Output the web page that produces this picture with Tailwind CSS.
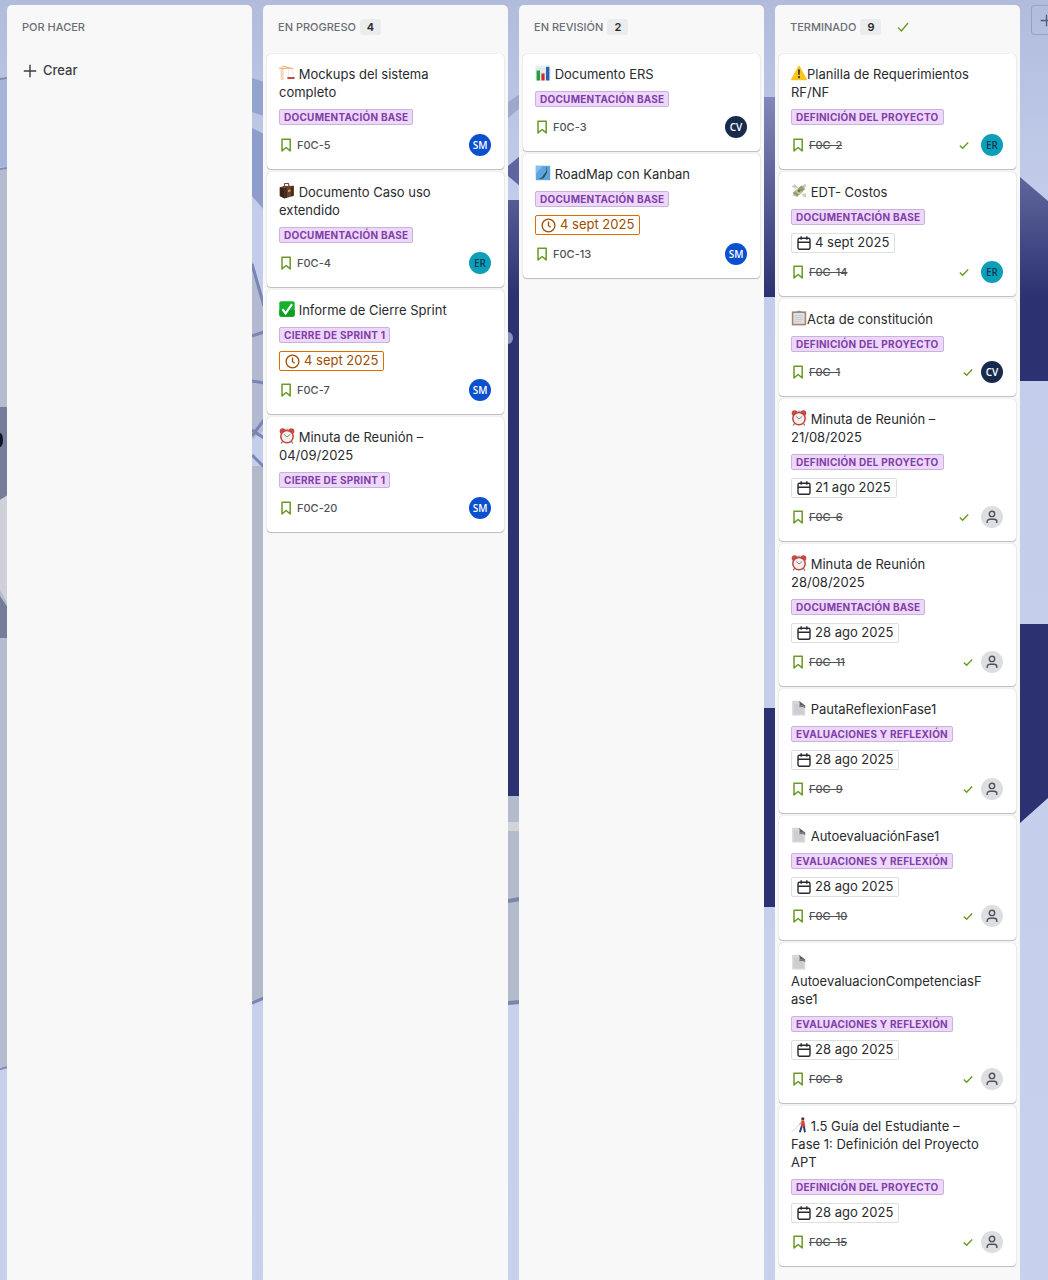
<!DOCTYPE html>
<html lang="es">
<head>
<meta charset="utf-8">
<meta name="viewport" content="width=device-width, initial-scale=1">
<title>Tablero</title>
<script src="https://cdn.jsdelivr.net/npm/@tailwindcss/browser@4"></script>
</head>
<body class="overflow-x-hidden bg-[#c7d0ec] font-['Inter',sans-serif] text-[#292a2e]">

<!-- Icon sprite -->
<svg class="hidden" aria-hidden="true">
  <symbol id="bookmark" viewBox="0 0 14 14"><path d="M3 1.3h8.2v11.6L7.1 9.5 3 12.9z" fill="none" stroke="#6a9a23" stroke-width="1.5" stroke-linejoin="round"/></symbol>
  <symbol id="check" viewBox="0 0 12 12"><path d="M1 6.6 4.4 10 11 2" fill="none" stroke="#6a9a23" stroke-width="1.4"/></symbol>
  <symbol id="check-small" viewBox="0 0 10 10"><path d="M.8 5.6 3.6 8.2 9.2 2.6" fill="none" stroke="#6a9a23" stroke-width="1.4"/></symbol>
  <symbol id="plus" viewBox="0 0 14 14"><path d="M7 .8v12.4M.8 7h12.4" fill="none" stroke="currentColor" stroke-width="1.4"/></symbol>
  <symbol id="calendar" viewBox="0 0 14 14"><rect x="1" y="2.2" width="12" height="11" rx="1.5" fill="none" stroke="currentColor" stroke-width="1.4"/><path d="M1 6.2h12M4.2 .2v3.6M9.8 .2v3.6" stroke="currentColor" stroke-width="1.4"/></symbol>
  <symbol id="clock" viewBox="0 0 16 16"><circle cx="8" cy="8" r="6.8" fill="none" stroke="currentColor" stroke-width="1.4"/><path d="M8 3.8v4.4l2.3 1.6" fill="none" stroke="currentColor" stroke-width="1.4"/></symbol>
  <symbol id="person" viewBox="0 0 14 14"><circle cx="7" cy="3.9" r="2.7" fill="none" stroke="#505258" stroke-width="1.4"/><path d="M2.2 13v-1.2a2.6 2.6 0 0 1 2.6-2.6h4.4a2.6 2.6 0 0 1 2.6 2.6V13" fill="none" stroke="#505258" stroke-width="1.4"/></symbol>

  <symbol id="crane" viewBox="0 0 16 16"><path d="M2.2 1v14M4 1v14M2.2 3l2 2-2 2 2 2-2 2 2 2-2 2" stroke="#f3c99a" stroke-width=".9" fill="none"/><path d="M0 3.4h14.5M4 1l9 2.4" stroke="#f0b98a" stroke-width="1.2" fill="none"/><path d="M10 3.4 9 12M12.5 3.4 15 12" stroke="#e6d8d2" stroke-width=".7"/><path d="M8.4 12h7.2v2H8.4z" fill="#c9493d"/></symbol>
  <symbol id="luggage" viewBox="0 0 16 16"><path d="M5.5 4V1.2Q5.5.5 6.2.5H9q.7 0 .7.7V4" fill="none" stroke="#6b4a35" stroke-width="1.1"/><path d="M.8 4.2 5 3l10-.2v10L5.5 15.5.8 13z" fill="#6a4230"/><path d="M.8 4.2 5.5 5.4v10.1L.8 13z" fill="#3b231b"/><path d="M7 4.9v10M13 3.6v9.6" stroke="#2e1b15" stroke-width="1.2"/><path d="M9 7l2.6-.4v2L9 9z" fill="#c49a5d"/></symbol>
  <symbol id="done" viewBox="0 0 16 16"><rect x=".3" y=".3" width="15.4" height="15.4" rx="2" fill="#17b22b"/><path d="M.3 9h15.4v4.7a2 2 0 0 1-2 2H2.3a2 2 0 0 1-2-2z" fill="#0da01f"/><path d="m3.4 8.3 3.2 4L13 3.2" fill="none" stroke="#fff" stroke-width="2.2"/></symbol>
  <symbol id="alarm" viewBox="0 0 16 16"><path d="m3.5 13.5-1.3 2M12.5 13.5l1.3 2" stroke="#777" stroke-width="1.3"/><circle cx="3.7" cy="3.3" r="3" fill="#c94a43"/><circle cx="12.3" cy="3.3" r="3" fill="#c94a43"/><path d="M6.5 1.2h3" stroke="#999"/><circle cx="8" cy="8.6" r="6.2" fill="#f4efeb" stroke="#c1453f" stroke-width="1.5"/><path d="m5 6.4 3 2.6 3.2-2.6" fill="none" stroke="#777" stroke-width=".9"/></symbol>
  <symbol id="chart" viewBox="0 0 16 16"><path d="M.5.5h15v15H.5z" fill="#e6eef1"/><path d="M.5 4h15M.5 8h15M.5 12h15" stroke="#cddbe1" stroke-width=".6"/><path d="M1.6 5.5h3.4v10H1.6z" fill="#22a03c"/><path d="M6.4 8.5h3.2v7H6.4z" fill="#cc2b2b"/><path d="M11 1.8h3.4v13.7H11z" fill="#2a63b5"/></symbol>
  <symbol id="map" viewBox="0 0 16 16"><path d="M.8.8h14.4v14.4H.8z" fill="#5ea5e0"/><path d="M.8.8h7L.8 9z" fill="#86bdea"/><path d="M12 1.4c-1.8 1.8.4 3.3-1 5.6-1.2 2-2 1.4-3 4-.8 1.6-2.6 2-4.4 2.4 2.6.9 5 .4 6-1.4 1-2.2 1.6-2.6 2.4-4.4.8-2-.6-3.6 0-6.2z" fill="#2d5442"/></symbol>
  <symbol id="warning" viewBox="0 0 16 16"><path d="M8 1.3 15.3 14.6H.7z" fill="#fbc520" stroke="#fbc520" stroke-width="1.4" stroke-linejoin="round"/><path d="M7 4.5h2l-.4 5.6H7.4z" fill="#3b3420"/><circle cx="8" cy="12.2" r="1.1" fill="#3b3420"/></symbol>
  <symbol id="money" viewBox="0 0 16 16"><path d="M.5 3.4 4 1l3.2 3.4-2.4 1.4zM9.5 3.8l4.6-3 1.4 2.8-4 2.4zM1.4 12l3-3 2 1.6-2.8 2.8zM11 11l3.6-.6 1 4-3.4-1z" fill="#c9cbc6"/><path d="m1.6 10 8.8-7.4 3.8 3.4L6 14z" fill="#93a077"/><path d="m4 8 3-2.6 4.6 4L8.4 12z" fill="#d9c08e"/><circle cx="8" cy="7.7" r="1.5" fill="#6d7b54"/></symbol>
  <symbol id="clipboard" viewBox="0 0 16 16"><path d="M.8 1.4h14.4v14H.8z" fill="#a38672"/><path d="M2.4 3h11.2v10.8H2.4z" fill="#dfe0e4"/><path d="M4 5.6h8M4 7.6h8M4 9.6h8M4 11.6h6" stroke="#bfc1c7" stroke-width=".7"/><path d="M5.2 2.6V1.2h1.6Q8-.4 9.2 1.2h1.6v1.4z" fill="#8e9095"/></symbol>
  <symbol id="page" viewBox="0 0 16 16"><path d="M1.2.8h6.6l6.4 5v9.8h-13z" fill="#d6d6d9"/><path d="M3 5h4M3 7h8M3 9h9M3 11h9M3 13h9" stroke="#bebec3" stroke-width=".6"/><path d="M7.8.8c1.2 1.5 1 3.2.6 5 2-.6 4-.6 5.8.8V5.4z" fill="#5e5e63"/><path d="M8.6 5.6c1.8-.6 3.8-.4 5.6 1v1.6C12.4 7 10.4 6.8 8.4 7.6z" fill="#77777c"/></symbol>
  <symbol id="walker" viewBox="0 0 16 16"><path d="M9 7 .6 15" stroke="#ccc" stroke-width=".8"/><circle cx="11.8" cy="1.8" r="1.6" fill="#5b3526"/><path d="M10.2 3.4h3l1.2 6H9.8z" fill="#d4483d"/><path d="m10.6 5-2.2 2.6" stroke="#e3a37c" stroke-width="1.2"/><path d="m10.8 9.2-2 6M12.8 9.2l1.2 6" stroke="#2b3a67" stroke-width="1.9"/></symbol>
</svg>

<div class="relative min-h-screen overflow-hidden">
  <!-- Board wallpaper -->
  <svg class="absolute inset-0 h-full w-full" viewBox="0 0 1048 1280" preserveAspectRatio="xMidYMin slice" aria-hidden="true">
    <defs>
      <linearGradient id="sky" x1="0" y1="0" x2="0" y2="1"><stop offset="0" stop-color="#b1bbdc"/><stop offset=".16" stop-color="#c3cdeb"/><stop offset="1" stop-color="#c7d0ec"/></linearGradient>
      <linearGradient id="navy" gradientUnits="userSpaceOnUse" x1="0" y1="97" x2="0" y2="297"><stop offset="0" stop-color="#8288b8"/><stop offset="1" stop-color="#2c3271"/></linearGradient>
    </defs>
    <path d="M0 0h1048v1280H0z" fill="url(#sky)"/>
    <!-- left edge -->
    <path d="M0 80h8v87H0z" fill="#a6b4da"/>
    <path d="M0 170h8v897H0z" fill="#b6bbcf"/>
    <path d="M0 407h8v88L0 500z" fill="#757d98"/>
    <path d="M8 495v110L0 590v-90z" fill="#cfd0da"/>
    <path d="M0 596l8 12v30H0z" fill="#757d98"/>
    <ellipse cx="0" cy="440" rx="3" ry="7" fill="#101426"/>
    <path d="M0 79l8-1M0 169l8-1M0 1069l8-2" stroke="#7f8cb0" stroke-width="2"/>
    <!-- first gutter -->
    <path d="M252 78l12 4v34l-12-4z" fill="#93a3cd"/>
    <path d="M252 128l12 6v76l-12-14z" fill="#8e9dcb"/>
    <path d="M252 260l12 40v130l-12 10z" fill="#b2b9d0"/>
    <path d="M252 466h12v534h-12z" fill="#b3b9cb"/>
    <path d="M252 264l12 42M252 336l12-4M252 381l12 2M252 436l12-16M252 430l12 8M252 455l12 12M252 1003l12-5" stroke="#7886b4" stroke-width="3"/>
    <!-- second gutter -->
    <path d="M508 102l12-8v14l-12 10z" fill="#9da9cb"/>
    <path d="M508 166l12-10v30l-12-10z" fill="#5f669f"/>
    <path d="M508 200h12v596h-12z" fill="url(#navy)"/>
    <ellipse cx="508" cy="338" rx="5" ry="6" fill="#8a92ba"/>
    <path d="M508 796h12v206h-12z" fill="#b4bbcd"/>
    <path d="M508 822h12v9h-12z" fill="#d3d4d9"/>
    <path d="M508 901l12-2M508 1003l12-1" stroke="#7886a8" stroke-width="4"/>
    <!-- third gutter -->
    <path d="M764 97h12v200h-12zM764 708h12v199h-12z" fill="url(#navy)"/>
    <!-- right edge -->
    <path d="M1020 177l28 24v180h-28zM1020 624h28v174l-28 25z" fill="url(#navy)"/>
  </svg>

  <main id="board" class="relative flex min-h-screen items-stretch gap-[11px] pt-[5px] pl-[7px]"></main>
</div>

<script>
const icon = (id, cls) => `<svg class="${cls}" aria-hidden="true"><use href="#${id}"/></svg>`;

const DOC = 'DOCUMENTACIÓN BASE', DEF = 'DEFINICIÓN DEL PROYECTO', EVA = 'EVALUACIONES Y REFLEXIÓN', CIE = 'CIERRE DE SPRINT 1';

const columns = [
  { name: 'POR HACER', create: true, cards: [] },
  { name: 'EN PROGRESO', cards: [
    { emoji: 'crane', title: ' Mockups del sistema completo', epic: DOC, key: 'F0C-5', who: 'SM' },
    { emoji: 'luggage', title: ' Documento Caso uso extendido', epic: DOC, key: 'F0C-4', who: 'ER' },
    { emoji: 'done', title: ' Informe de Cierre Sprint', epic: CIE, due: '4 sept 2025', key: 'F0C-7', who: 'SM' },
    { emoji: 'alarm', title: ' Minuta de Reunión – 04/09/2025', epic: CIE, key: 'F0C-20', who: 'SM' },
  ]},
  { name: 'EN REVISIÓN', cards: [
    { emoji: 'chart', title: ' Documento ERS', epic: DOC, key: 'F0C-3', who: 'CV' },
    { emoji: 'map', title: ' RoadMap con Kanban', epic: DOC, due: '4 sept 2025', key: 'F0C-13', who: 'SM' },
  ]},
  { name: 'TERMINADO', done: true, cards: [
    { emoji: 'warning', title: 'Planilla de Requerimientos RF/NF', epic: DEF, key: 'F0C-2', who: 'ER', wide: true },
    { emoji: 'money', title: ' EDT- Costos', epic: DOC, due: '4 sept 2025', key: 'F0C-14', who: 'ER', wide: true },
    { emoji: 'clipboard', title: 'Acta de constitución', epic: DEF, key: 'F0C-1', who: 'CV' },
    { emoji: 'alarm', title: ' Minuta de Reunión – 21/08/2025', epic: DEF, due: '21 ago 2025', key: 'F0C-6', wide: true },
    { emoji: 'alarm', title: ' Minuta de Reunión 28/08/2025', epic: DOC, due: '28 ago 2025', key: 'F0C-11' },
    { emoji: 'page', title: ' PautaReflexionFase1', epic: EVA, due: '28 ago 2025', key: 'F0C-9' },
    { emoji: 'page', title: ' AutoevaluaciónFase1', epic: EVA, due: '28 ago 2025', key: 'F0C-10' },
    { emoji: 'page', title: ' AutoevaluacionCompetenciasFase1', epic: EVA, due: '28 ago 2025', key: 'F0C-8' },
    { emoji: 'walker', title: ' 1.5 Guía del Estudiante – Fase 1: Definición del Proyecto APT', epic: DEF, due: '28 ago 2025', key: 'F0C-15' },
  ]},
];

const avatarColors = { SM: 'bg-[#0b50cf] text-white', ER: 'bg-[#0b9fb8] text-[#12395a]', CV: 'bg-[#172b4d] text-white' };

const avatar = who => who
  ? `<span class="flex size-[22px] items-center justify-center rounded-full font-['Open_Sans',sans-serif] text-[10px] font-semibold ${avatarColors[who]}">${who}</span>`
  : `<span class="flex size-[22px] items-center justify-center rounded-full bg-[#dddee1]">${icon('person', 'size-[14px]')}</span>`;

const due = (text, done) => `<div class="mt-2 flex h-5 w-fit items-center gap-1 rounded-[2px] border px-[5px] text-[13px] ${done ? 'border-[#dddee1]' : 'border-[#e06c00] text-[#9e4c00]'}">${done ? icon('calendar', 'size-[14px]') : icon('clock', 'size-[15px]')}<span>${text}</span></div>`;

const card = (c, done) => `
  <article class="flex flex-col rounded-[4px] bg-white px-[12px] pt-[11px] pb-[13px] shadow-[0_1px_1px_rgba(30,31,33,0.25),0_0_1px_rgba(30,31,33,0.31)]">
    <h3 class="w-[193px] text-[13px] leading-[18px] break-words">${icon(c.emoji, 'inline-block size-4 align-[-2px]')}${c.title}</h3>
    <span class="mt-2 flex h-4 w-fit items-center rounded-[2px] border border-[#c9b3d6] bg-[#eed7fc] px-1 text-[10px] font-bold tracking-wide text-[#803fa5]">${c.epic}</span>
    ${c.due ? due(c.due, done) : ''}
    <div class="${c.due ? 'mt-2' : 'mt-[9px]'} flex h-[22px] items-center">
      ${icon('bookmark', 'size-[14px]')}
      <a href="#${c.key}" class="ml-1 text-[11px] font-medium text-[#505258] ${done ? 'line-through' : ''}">${c.key}</a>
      <span class="ml-auto flex items-center pr-px ${c.wide ? 'gap-3' : 'gap-2'}">${done ? icon('check-small', 'size-[10px]') : ''}${avatar(c.who)}</span>
    </div>
  </article>`;

document.getElementById('board').innerHTML = columns.map(col => `
  <section class="w-[245px] shrink-0 rounded-t-[5px] bg-[#f8f8f8] px-1 pb-3">
    <header class="flex h-[49px] items-start gap-1 pt-[14px] pl-[11px]">
      <h2 class="text-[11px] leading-4 font-medium text-[#6b6e76]">${col.name}</h2>
      ${col.cards.length ? `<span class="flex h-4 w-[21px] items-center justify-center rounded-[3px] bg-[#ebecee] text-[11px] font-semibold">${col.cards.length}</span>` : ''}
      ${col.done ? icon('check', 'ml-3 mt-0.5 size-3') : ''}
    </header>
    ${col.create ? `<button class="mt-px flex h-8 items-center gap-[6px] pl-3 text-[13px] font-medium text-[#3b3d42]">${icon('plus', 'size-[14px]')}Crear</button>` : ''}
    <div class="flex flex-col gap-[3px]">${col.cards.map(c => card(c, col.done)).join('')}</div>
  </section>`).join('') +
  `<button aria-label="Crear columna" class="flex h-[30px] w-[30px] shrink-0 items-center justify-center rounded-[3px] border border-[#98a1bf] text-[#505a7a]">${icon('plus', 'size-[13px]')}</button>`;
</script>
</body>
</html>
